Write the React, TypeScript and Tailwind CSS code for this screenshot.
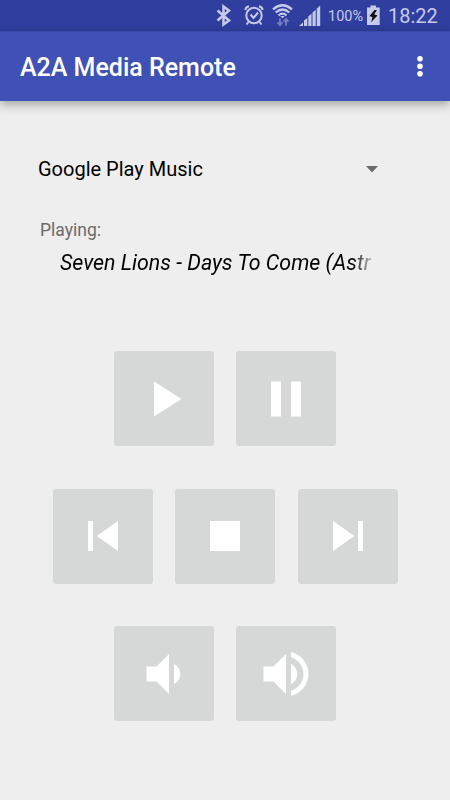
import React, { ReactElement, ReactNode } from "react";

function StatusBar(): ReactElement {
  return (
    <div className="flex h-[31px] bg-[#303f9f] text-[#c5cae9]">
      <svg className="h-[31px] w-[122px] ml-[205px] shrink-0" viewBox="205 0 122 31">
        {/* bluetooth */}
        <path
          d="M217.5 10.5 L229 20.5 L223.5 24.5 V6.500 L229 10.500 L217.500 20.500"
          fill="none"
          stroke="currentColor"
          strokeWidth="2.5"
        />
        {/* alarm */}
        <g fill="none" stroke="currentColor" strokeWidth="2">
          <circle cx="254" cy="15.500" r="7.700" />
          <path d="M250.500 14.500 L253.500 18 L258 12.500" />
          <path d="M245.300 10 Q245.800 7 249 6.300 M259 6.300 Q262.200 7 262.700 10 M248.500 22 L246.500 24.500 M259.500 22 L261.500 24.500" />
        </g>
        {/* wifi */}
        <g fill="none" stroke="currentColor" strokeWidth="2.300">
          <path d="M273 9.300 Q282.500 1.300 292 9.300" />
          <path d="M275.700 12.500 Q282.500 6.500 289.300 12.500" />
          <path d="M278.500 15.500 Q282.500 11.800 286.500 15.500" />
        </g>
        <path d="M280.200 16 H284.800 L282.500 18.300 Z" fill="currentColor" />
        <g fill="none" stroke="#727bc0" strokeWidth="1.900">
          <path d="M280 18.500 V25 M277.500 22.300 L280 25 L282.500 22.300" />
          <path d="M286 25.500 V19 M283.500 21.700 L286 19 L288.500 21.700" />
        </g>
        {/* signal */}
        <path
          d="M299 26 L303 22.500 V26 Z M304 20.500 L307.300 18 V26 H304 Z M308.300 16.500 L311.500 13.500 V26 H308.300 Z M312.500 12.500 L315.700 9.700 V26 H312.500 Z M316.800 8.500 L320.200 5.500 V26 H316.800 Z"
          fill="currentColor"
        />
      </svg>
      <span className="ml-px w-[38px] text-[14.5px] leading-[33px]">100%</span>
      <svg className="h-[31px] w-[14px] shrink-0" viewBox="366 0 14 31">
        <path d="M367 7.5 H370.5 V5.5 H376 V7.5 H379.7 V25 H367 Z" fill="currentColor" />
        <path d="M374.5 10 L369.5 16 L372.5 17.2 L371 22.3 L377.5 15.5 L374.2 14.2 L377 10 Z" fill="#111" />
      </svg>
      <span className="ml-2 text-[20px] leading-[33px]">18:22</span>
    </div>
  );
}

function AppBar(): ReactElement {
  return (
    <div className="flex h-[70px] items-center justify-between border-t border-[#3949ab] bg-[#3f51b5] pl-5 pr-[27px] text-white shadow-[0_3px_10px_rgba(0,0,0,0.35)]">
      <h1 className="pt-px text-[25px] font-medium leading-none">A2A Media Remote</h1>
      <svg className="-mt-0.5 h-[22px] w-[6px]" viewBox="0 0 6 22" fill="currentColor">
        <circle cx="3" cy="3.7" r="2.8" />
        <circle cx="3" cy="11.2" r="2.8" />
        <circle cx="3" cy="18.7" r="2.8" />
      </svg>
    </div>
  );
}

function MediaButton(p: { label: string; children: ReactNode }): ReactElement {
  return (
    <button
      aria-label={p.label}
      className="flex h-[95px] w-[100px] items-center justify-center rounded-[3px] bg-[#d6d8d7]"
    >
      <svg className="h-[60px] w-[60px]" viewBox="0 0 24 24" fill="white">
        {p.children}
      </svg>
    </button>
  );
}

export default function App(): ReactElement {
  return (
    <div className="h-[800px] w-[450px] overflow-hidden bg-[#eeeeee] font-[Roboto,sans-serif]">
      <StatusBar />
      <AppBar />
      <div className="flex items-center justify-between pl-[38px] pr-[72px] pt-[56px]">
        <span className="text-[20px] leading-6 text-black">Google Play Music</span>
        <svg className="h-[7px] w-3" viewBox="0 0 12 7">
          <path d="M0 0 H12 L6 6.5 Z" fill="#6b6b6b" />
        </svg>
      </div>
      <p className="ml-10 mt-[39px] text-[17.5px] leading-5 text-[#6b6b6b]">Playing:</p>
      <p className="ml-[60px] mt-[9px] w-[314px] whitespace-nowrap text-[21.4px] italic leading-7 text-black [mask-image:linear-gradient(to_right,black_292px,transparent_316px)]">
        Seven Lions - Days To Come (Astr
      </p>
      <div className="mt-[74px] flex flex-col items-center gap-[42.5px]">
        <div className="flex gap-[22.5px]">
          <MediaButton label="Play">
            <path d="M8 5v14l11-7z" />
          </MediaButton>
          <MediaButton label="Pause">
            <path d="M6 19h4V5H6v14zm8-14v14h4V5h-4z" />
          </MediaButton>
        </div>
        <div className="flex gap-[22.5px]">
          <MediaButton label="Previous">
            <path d="M6 6h2v12H6zm3.5 6l8.5 6V6z" />
          </MediaButton>
          <MediaButton label="Stop">
            <path d="M6 6h12v12H6z" />
          </MediaButton>
          <MediaButton label="Next">
            <path d="M6 18l8.5-6L6 6v12zM16 6v12h2V6h-2z" />
          </MediaButton>
        </div>
        <div className="flex gap-[22.5px]">
          <MediaButton label="Volume down">
            <path d="M5 9v6h4l5 5V4L9 9H5zM16 8v8c1.5-.7 2.5-2.2 2.5-4S17.5 8.7 16 8z" />
          </MediaButton>
          <MediaButton label="Volume up">
            <path d="M3 9v6h4l5 5V4L7 9H3zm13.5 3c0-1.77-1.02-3.29-2.5-4.03v8.05c1.48-.73 2.5-2.25 2.5-4.02zM14 3.23v2.06c2.89.86 5 3.54 5 6.71s-2.11 5.85-5 6.71v2.06c4.01-.91 7-4.49 7-8.77s-2.99-7.86-7-8.77z" />
          </MediaButton>
        </div>
      </div>
    </div>
  );
}
